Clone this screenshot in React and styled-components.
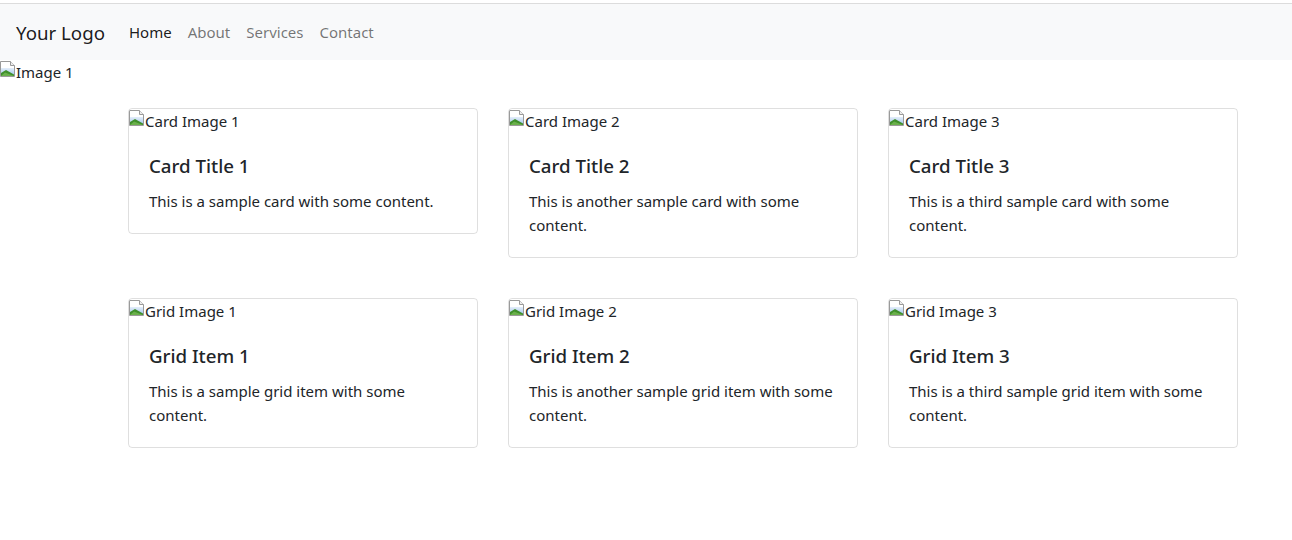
import styled, { createGlobalStyle } from 'styled-components'

const GlobalStyle = createGlobalStyle`
  * { box-sizing: border-box; }
  body {
    margin: 0;
    font-family: 'Noto Sans', 'Open Sans', sans-serif;
    font-size: 15px;
    line-height: 24px;
    color: #212529;
    background: #fff;
  }
`

const Page = styled.div`
  padding-top: 3px;
`

const Navbar = styled.nav`
  border-top: 1px solid #dcdcdc;
  background-color: #f8f9fa;
  height: 57px;
  padding: 8px 16px;
  display: flex;
  align-items: center;
`

const Brand = styled.a`
  font-size: 18.7px;
  line-height: 30px;
  color: rgba(0, 0, 0, 0.9);
  margin-right: 16px;
  margin-top: 2px;
  text-decoration: none;
`

const NavList = styled.ul`
  list-style: none;
  margin: 0;
  padding: 0;
  display: flex;
`

const NavLink = styled.a`
  display: block;
  padding: 8px;
  font-size: 15px;
  line-height: 24px;
  text-decoration: none;
  color: ${p => (p.$active ? 'rgba(0, 0, 0, 0.9)' : 'rgba(0, 0, 0, 0.55)')};
`

const Broken = styled.div`
  display: flex;
  align-items: flex-start;
  height: 24px;
  line-height: 24px;
  color: #212529;
`

const Icon = styled.svg`
  width: 16px;
  height: 16px;
  margin-top: 1px;
  flex: none;
`

const Grid = styled.div`
  margin: 24px 0 0 128px;
  display: grid;
  grid-template-columns: repeat(3, 350px);
  column-gap: 30px;
  row-gap: 40px;
  align-items: start;
`

const Card = styled.div`
  border: 1px solid rgba(0, 0, 0, 0.125);
  border-radius: 4px;
  overflow: hidden;
`

const CardBody = styled.div`
  padding: 20px;
`

const CardTitle = styled.h5`
  margin: 1px 0 11px;
  font-size: 18.7px;
  font-weight: 500;
  line-height: 24px;
`

const CardText = styled.p`
  margin: 0;
`

function BrokenImage({ alt }) {
  return (
    <Broken>
      <Icon viewBox="0 0 16 16">
        <defs>
          <linearGradient id="sky" x1="0" y1="0" x2="0" y2="1">
            <stop offset="0" stopColor="#e4eefa" />
            <stop offset="1" stopColor="#9cc3ea" />
          </linearGradient>
        </defs>
        <path d="M0.5 0.5h10l4 4v11h-14z" fill="#fff" stroke="#9a9a9a" />
        <path d="M10.5 0.5v4h4" fill="#eee" stroke="#9a9a9a" />
        <path d="M1 7h13v8H1z" fill="url(#sky)" />
        <path d="M1 15L1 12L6 9L14 13.5L14 15z" fill="#3f8f2b" />
        <path d="M1 15L5 11.5L14 15z" fill="#6ab04c" />
      </Icon>
      {alt}
    </Broken>
  )
}

const cards = [
  { img: 'Card Image 1', title: 'Card Title 1', text: 'This is a sample card with some content.' },
  { img: 'Card Image 2', title: 'Card Title 2', text: 'This is another sample card with some content.' },
  { img: 'Card Image 3', title: 'Card Title 3', text: 'This is a third sample card with some content.' },
  { img: 'Grid Image 1', title: 'Grid Item 1', text: 'This is a sample grid item with some content.' },
  { img: 'Grid Image 2', title: 'Grid Item 2', text: 'This is another sample grid item with some content.' },
  { img: 'Grid Image 3', title: 'Grid Item 3', text: 'This is a third sample grid item with some content.' },
]

export default function App() {
  return (
    <Page>
      <GlobalStyle />
      <Navbar>
        <Brand href="#">Your Logo</Brand>
        <NavList>
          <li><NavLink href="#" $active>Home</NavLink></li>
          <li><NavLink href="#">About</NavLink></li>
          <li><NavLink href="#">Services</NavLink></li>
          <li><NavLink href="#">Contact</NavLink></li>
        </NavList>
      </Navbar>
      <BrokenImage alt="Image 1" />
      <Grid>
        {cards.map(c => (
          <Card key={c.title}>
            <BrokenImage alt={c.img} />
            <CardBody>
              <CardTitle>{c.title}</CardTitle>
              <CardText>{c.text}</CardText>
            </CardBody>
          </Card>
        ))}
      </Grid>
    </Page>
  )
}
